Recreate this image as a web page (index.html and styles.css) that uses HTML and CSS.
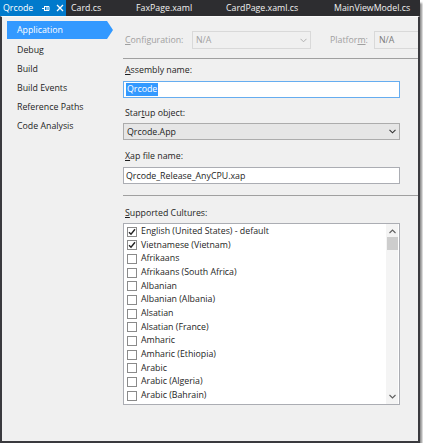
FILE: index.html
```html
<!DOCTYPE html>
<html>
<head>
<meta charset="utf-8">
<link rel="stylesheet" href="styles.css">
</head>
<body>
<div class="window">
  <div class="tabs">
    <div class="tab tab-active">
      <span class="tab-title">Qrcode</span>
      <svg class="pin" width="8" height="7" viewBox="0 0 8 7"><path d="M0 3.5H2.5M2.5 1V6M2.5 1.5H7V5.5H2.5M5 1.5V5.5" stroke="#fff" stroke-width="1" fill="none"/></svg>
      <svg class="close" width="8" height="8" viewBox="0 0 8 8"><path d="M1 1L7 7M7 1L1 7" stroke="#fff" stroke-width="1.3"/></svg>
    </div>
    <div class="tab tab-card">Card.cs</div>
    <div class="tab tab-fax">FaxPage.xaml</div>
    <div class="tab tab-cardpage">CardPage.xaml.cs</div>
    <div class="tab tab-main">MainViewModel.cs</div>
  </div>
  <div class="body">
    <nav class="nav">
      <div class="nav-item nav-selected">Application</div>
      <div class="nav-item">Debug</div>
      <div class="nav-item">Build</div>
      <div class="nav-item">Build Events</div>
      <div class="nav-item">Reference Paths</div>
      <div class="nav-item">Code Analysis</div>
    </nav>
    <main class="pane">
      <div class="config-row">
        <span class="dis-label cfg-label"><u>C</u>onfiguration:</span>
        <div class="dis-combo cfg-combo">
          <span>N/A</span>
          <svg width="7" height="5" viewBox="0 0 7 5"><path d="M0.5 0.8L3.5 3.8L6.5 0.8" stroke="#b0b0b0" stroke-width="1" fill="none"/></svg>
        </div>
        <span class="dis-label plat-label">Platfor<u>m</u>:</span>
        <div class="dis-combo plat-combo"><span class="plat-val">N/A</span></div>
      </div>
      <div class="sep sep1"></div>
      <div class="label lbl-asm"><u>A</u>ssembly name:</div>
      <div class="textbox textbox-focus"><span class="selected-text">Qrcode</span></div>
      <div class="label lbl-startup">Star<u>t</u>up object:</div>
      <div class="combo">
        <span>Qrcode.App</span>
        <svg width="7" height="5" viewBox="0 0 7 5"><path d="M0.5 0.8L3.5 3.8L6.5 0.8" stroke="#333" stroke-width="1.1" fill="none"/></svg>
      </div>
      <div class="label lbl-xap"><u>X</u>ap file name:</div>
      <div class="textbox">Qrcode_Release_AnyCPU.xap</div>
      <div class="sep sep2"></div>
      <div class="label lbl-cult"><u>S</u>upported Cultures:</div>
      <div class="listbox">
        <div class="list-items">
          <div class="item"><span class="cb"><svg width="8" height="8" viewBox="0 0 8 8"><path d="M1 4.2L3 6.3L7 1.3" stroke="#222" stroke-width="1.4" fill="none"/></svg></span>English (United States) - default</div>
          <div class="item"><span class="cb"><svg width="8" height="8" viewBox="0 0 8 8"><path d="M1 4.2L3 6.3L7 1.3" stroke="#222" stroke-width="1.4" fill="none"/></svg></span>Vietnamese (Vietnam)</div>
          <div class="item"><span class="cb"></span>Afrikaans</div>
          <div class="item"><span class="cb"></span>Afrikaans (South Africa)</div>
          <div class="item"><span class="cb"></span>Albanian</div>
          <div class="item"><span class="cb"></span>Albanian (Albania)</div>
          <div class="item"><span class="cb"></span>Alsatian</div>
          <div class="item"><span class="cb"></span>Alsatian (France)</div>
          <div class="item"><span class="cb"></span>Amharic</div>
          <div class="item"><span class="cb"></span>Amharic (Ethiopia)</div>
          <div class="item"><span class="cb"></span>Arabic</div>
          <div class="item"><span class="cb"></span>Arabic (Algeria)</div>
          <div class="item"><span class="cb"></span>Arabic (Bahrain)</div>
        </div>
        <div class="scrollbar">
          <svg class="arrow-up" width="7" height="5" viewBox="0 0 7 5"><path d="M0.5 4L3.5 1L6.5 4" stroke="#606060" stroke-width="1.1" fill="none"/></svg>
          <div class="thumb"></div>
          <div class="track-fill"></div>
          <svg class="arrow-down" width="7" height="5" viewBox="0 0 7 5"><path d="M0.5 1L3.5 4L6.5 1" stroke="#606060" stroke-width="1.1" fill="none"/></svg>
        </div>
      </div>
    </main>
  </div>
</div>
</body>
</html>
```
FILE: styles.css
```css
html, body {
  margin: 0;
  padding: 0;
  background: #ffffff;
}
body {
  font-family: "Open Sans", "Noto Sans", sans-serif;
  font-size: 8.8px;
  color: #1e1e1e;
}
.window {
  width: 420px;
  height: 443px;
  display: flex;
  flex-direction: column;
  box-shadow: 2px 3px 2px rgba(0, 0, 0, 0.45);
}
.tabs {
  height: 16px;
  background: #2d2d30;
  display: flex;
  flex: none;
  color: #f1f1f1;
}
.tab {
  height: 16px;
  line-height: 16px;
  padding-left: 4px;
  box-sizing: border-box;
  flex: none;
  white-space: nowrap;
}
.tab-active {
  width: 66px;
  background: #007acc;
  color: #fff;
  display: flex;
  align-items: center;
  padding-left: 3px;
}
.tab-title { flex: none; }
.pin { margin-left: 9px; }
.close { margin-left: 6px; }
.tab-card { width: 66px; padding-left: 5px; }
.tab-fax { width: 90px; }
.tab-cardpage { width: 108px; }
.tab-main { width: 90px; }
.body {
  flex: 1;
  display: flex;
  background: #f0f0f0;
  border-left: 2px solid #3a3a3e;
  border-right: 2px solid #3a3a3e;
  border-bottom: 2px solid #3a3a3e;
  border-top: 1px solid #fbfbfb;
}
.nav {
  width: 111px;
  flex: none;
  padding-top: 4px;
}
.nav-item {
  height: 19px;
  line-height: 19px;
  padding-left: 15px;
}
.nav-selected {
  position: relative;
  margin-left: 5px;
  width: 100px;
  height: 18px;
  line-height: 18px;
  padding-left: 10px;
  box-sizing: border-box;
  background: #3399ff;
  color: #fff;
  margin-bottom: 2px;
}
.nav-selected::after {
  content: "";
  position: absolute;
  right: -6px;
  top: 0;
  border-top: 9px solid transparent;
  border-bottom: 9px solid transparent;
  border-left: 6px solid #3399ff;
}
.pane {
  flex: 1;
  padding-top: 14px;
  padding-left: 10px;
  display: flex;
  flex-direction: column;
  overflow: hidden;
}
.config-row {
  height: 18px;
  display: flex;
  align-items: center;
  white-space: nowrap;
}
.dis-label { color: #a0a0a0; }
.cfg-label { margin-left: 2px; width: 67px; }
.dis-combo {
  height: 18px;
  box-sizing: border-box;
  border: 1px solid #d9d9d9;
  background: #f0f0f0;
  color: #a0a0a0;
  display: flex;
  align-items: center;
  padding-left: 3px;
}
.cfg-combo {
  width: 119px;
  justify-content: space-between;
  padding-right: 3px;
}
.plat-label { margin-left: 19px; width: 44px; }
.plat-combo {
  flex: 1;
  border-right: none;
  padding-left: 4px;
}
.plat-val { color: #7a7a7a; }
.sep {
  height: 1px;
  background: #a0a0a0;
  flex: none;
}
.sep1 { margin-top: 9px; }
.sep2 { margin-top: 11px; }
.label {
  height: 14px;
  line-height: 14px;
  padding-left: 2px;
  flex: none;
}
.lbl-asm { margin-top: 4px; margin-bottom: 4px; }
.lbl-startup { margin-top: 8px; margin-bottom: 3px; }
.lbl-xap { margin-top: 9px; margin-bottom: 4px; }
.lbl-cult { margin-top: 10px; margin-bottom: 3px; }
.textbox {
  width: 277px;
  height: 17px;
  box-sizing: border-box;
  border: 1px solid #abadb3;
  background: #fff;
  display: flex;
  align-items: center;
  padding-left: 2px;
  flex: none;
}
.textbox-focus { border-color: #66adf0; }
.selected-text {
  background: #3399ff;
  color: #fff;
  line-height: 13px;
  padding: 0 1px;
}
.combo {
  width: 277px;
  height: 17px;
  box-sizing: border-box;
  border: 1px solid #acacac;
  background: #e6e6e6;
  display: flex;
  align-items: center;
  justify-content: space-between;
  padding: 0 3px 0 3px;
  flex: none;
}
.listbox {
  width: 277px;
  height: 182px;
  box-sizing: border-box;
  border: 1px solid #abadb3;
  background: #fff;
  display: flex;
  flex: none;
}
.list-items {
  flex: 1;
  padding-top: 1px;
  padding-left: 3px;
}
.item {
  height: 13.67px;
  line-height: 13.67px;
  display: flex;
  align-items: center;
  white-space: nowrap;
}
.cb {
  width: 10px;
  height: 10px;
  box-sizing: border-box;
  border: 1px solid #8a8a8a;
  background: #fff;
  margin-right: 4px;
  display: flex;
  align-items: center;
  justify-content: center;
  flex: none;
}
.scrollbar {
  width: 12px;
  margin-right: 1px;
  background: #f4f4f4;
  display: flex;
  flex-direction: column;
  align-items: center;
}
.arrow-up { margin-top: 5px; flex: none; }
.thumb {
  width: 11px;
  height: 13px;
  background: #cdcdcd;
  margin-top: 3px;
  flex: none;
}
.track-fill { flex: 1; }
.arrow-down { margin-bottom: 5px; flex: none; }
```
